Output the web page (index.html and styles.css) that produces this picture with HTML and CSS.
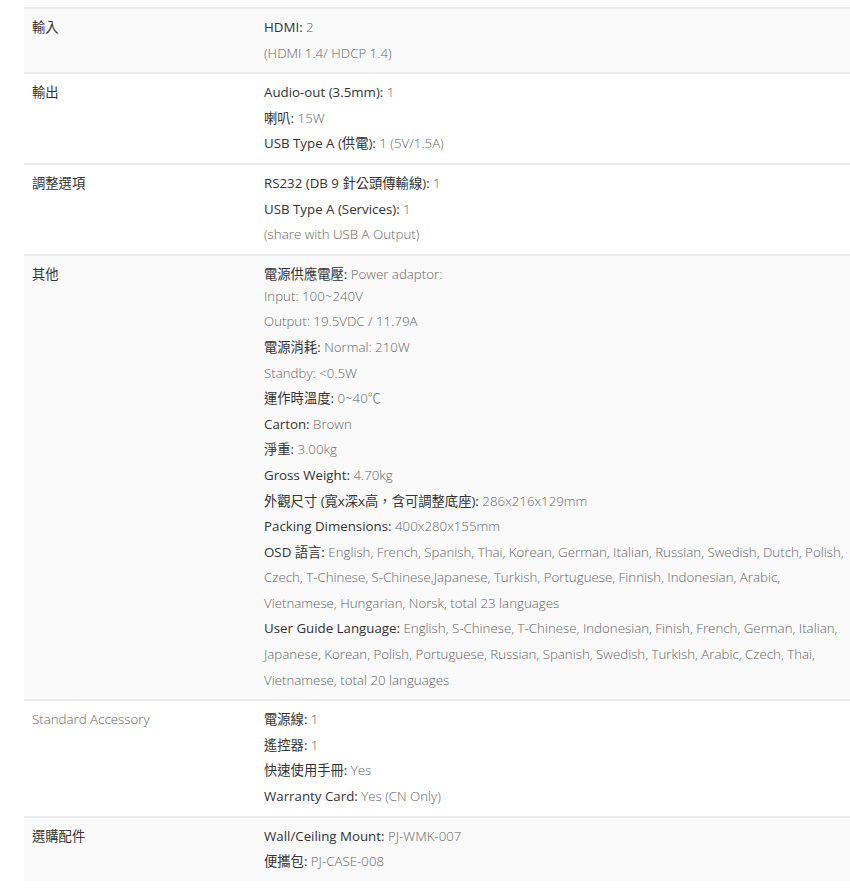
FILE: index.html
```html
<!DOCTYPE html>
<html lang="zh-Hant">
<head>
    <meta charset="UTF-8">
    <meta name="viewport" content="width=device-width, initial-scale=1.0">
    <title>規格</title>
    <link rel="stylesheet" href="styles.css">
</head>
<body>
    <div class="spec-wrap">
        <table class="spec-table">
            <tr class="shade">
                <th>輸入</th>
                <td>
                    <div class="line"><b>HDMI:</b> 2</div>
                    <div class="line">(HDMI 1.4/ HDCP 1.4)</div>
                </td>
            </tr>
            <tr>
                <th>輸出</th>
                <td>
                    <div class="line"><b>Audio-out (3.5mm):</b> 1</div>
                    <div class="line"><b>喇叭:</b> 15W</div>
                    <div class="line"><b>USB Type A (供電):</b> 1 (5V/1.5A)</div>
                </td>
            </tr>
            <tr>
                <th>調整選項</th>
                <td>
                    <div class="line"><b>RS232 (DB 9 針公頭傳輸線):</b> 1</div>
                    <div class="line"><b>USB Type A (Services):</b> 1</div>
                    <div class="line">(share with USB A Output)</div>
                </td>
            </tr>
            <tr class="shade">
                <th>其他</th>
                <td>
                    <div class="line"><b>電源供應電壓:</b> Power adaptor:</div>
                    <div class="line tight">Input: 100~240V</div>
                    <div class="line">Output: 19.5VDC / 11.79A</div>
                    <div class="line"><b>電源消耗:</b> Normal: 210W</div>
                    <div class="line">Standby: &lt;0.5W</div>
                    <div class="line"><b>運作時溫度:</b> 0~40℃</div>
                    <div class="line"><b>Carton:</b> Brown</div>
                    <div class="line"><b>淨重:</b> 3.00kg</div>
                    <div class="line"><b>Gross Weight:</b> 4.70kg</div>
                    <div class="line"><b>外觀尺寸 (寬x深x高，含可調整底座):</b> 286x216x129mm</div>
                    <div class="line"><b>Packing Dimensions:</b> 400x280x155mm</div>
                    <div class="line"><b>OSD 語言:</b> English, French, Spanish, Thai, Korean, German, Italian, Russian, Swedish, Dutch, Polish, Czech, T-Chinese, S-Chinese,Japanese, Turkish, Portuguese, Finnish, Indonesian, Arabic, Vietnamese, Hungarian, Norsk, total 23 languages</div>
                    <div class="line"><b>User Guide Language:</b> English, S-Chinese, T-Chinese, Indonesian, Finish, French, German, Italian, Japanese, Korean, Polish, Portuguese, Russian, Spanish, Swedish, Turkish, Arabic, Czech, Thai, Vietnamese, total 20 languages</div>
                </td>
            </tr>
            <tr>
                <th class="light">Standard Accessory</th>
                <td>
                    <div class="line"><b>電源線:</b> 1</div>
                    <div class="line"><b>遙控器:</b> 1</div>
                    <div class="line"><b>快速使用手冊:</b> Yes</div>
                    <div class="line"><b>Warranty Card:</b> Yes (CN Only)</div>
                </td>
            </tr>
            <tr class="shade">
                <th>選購配件</th>
                <td>
                    <div class="line"><b>Wall/Ceiling Mount:</b> PJ-WMK-007</div>
                    <div class="line"><b>便攜包:</b> PJ-CASE-008</div>
                </td>
            </tr>
        </table>
    </div>
</body>
</html>
```

FILE: styles.css
```css
body {
    margin: 0;
    background: #fff;
    font-family: "Open Sans", "Noto Sans CJK TC", sans-serif;
    font-size: 13.3px;
    color: #666;
}

.spec-wrap {
    padding: 7px 0 0 24px;
}

.spec-table {
    width: 100%;
    border-collapse: collapse;
}

.spec-table tr {
    border-top: 2px solid #ececec;
}

.spec-table tr.shade {
    background: #fafafa;
}

.spec-table th,
.spec-table td {
    vertical-align: top;
    text-align: left;
    padding: 6px 8px;
    line-height: 25.6px;
}

.spec-table th {
    width: 216px;
    font-weight: 400;
    color: #333;
}

.spec-table th.light {
    color: #666;
    font-weight: 300;
}

.spec-table td {
    padding-right: 0;
    font-weight: 300;
    color: #666;
}

.spec-table td b {
    font-weight: 400;
    color: #333;
}

.line.tight {
    margin-top: -3.6px;
}
```
